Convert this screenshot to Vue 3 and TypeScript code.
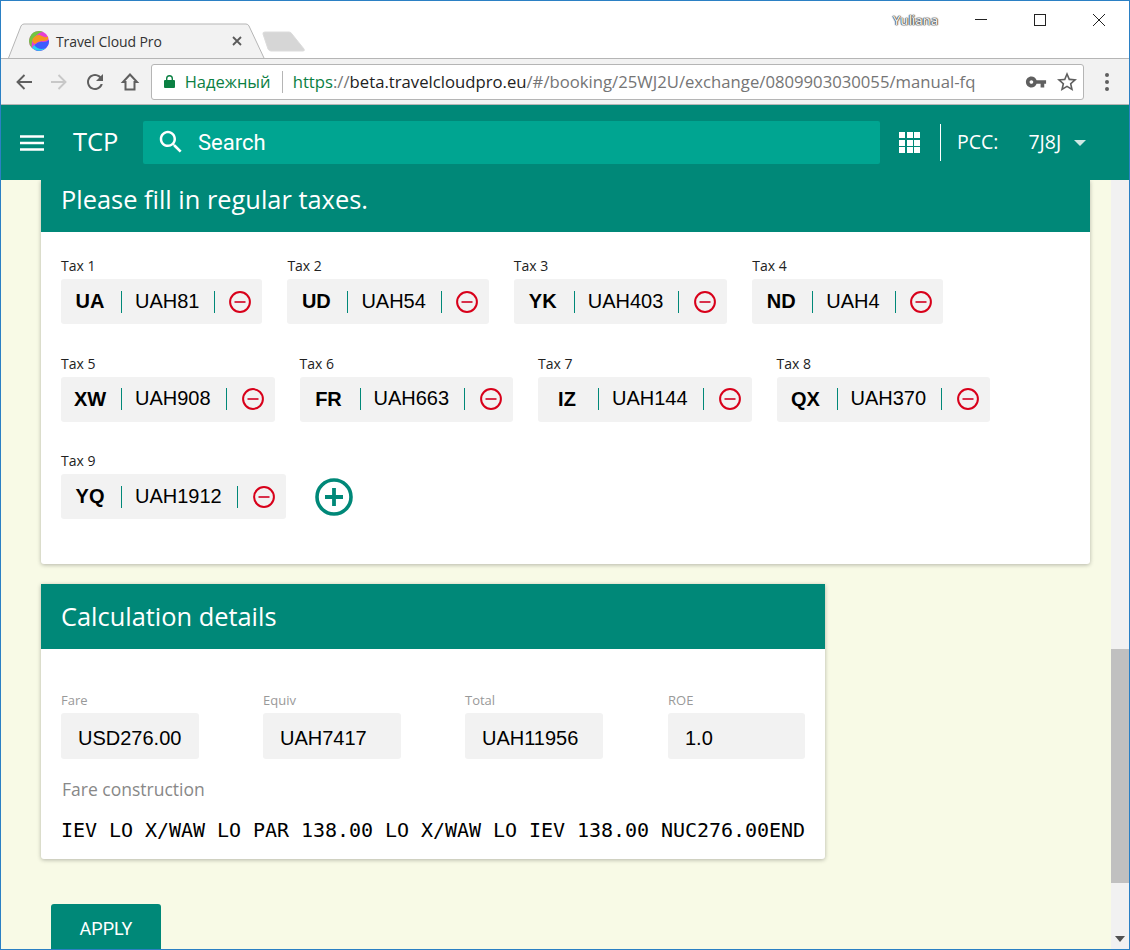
<script setup lang="ts">
interface Tax {
  label: string
  code: string
  amount: string
}

const taxes: Tax[] = [
  { label: 'Tax 1', code: 'UA', amount: 'UAH81' },
  { label: 'Tax 2', code: 'UD', amount: 'UAH54' },
  { label: 'Tax 3', code: 'YK', amount: 'UAH403' },
  { label: 'Tax 4', code: 'ND', amount: 'UAH4' },
  { label: 'Tax 5', code: 'XW', amount: 'UAH908' },
  { label: 'Tax 6', code: 'FR', amount: 'UAH663' },
  { label: 'Tax 7', code: 'IZ', amount: 'UAH144' },
  { label: 'Tax 8', code: 'QX', amount: 'UAH370' },
  { label: 'Tax 9', code: 'YQ', amount: 'UAH1912' },
]

const details = [
  { label: 'Fare', value: 'USD276.00' },
  { label: 'Equiv', value: 'UAH7417' },
  { label: 'Total', value: 'UAH11956' },
  { label: 'ROE', value: '1.0' },
]
</script>

<template>
  <div class="window">
    <div class="titlebar">
      <div class="tab">
        <svg class="tab__shape" width="258" height="36" viewBox="0 0 258 36">
          <path d="M0.5 35 L13 3 Q14 1 16 1 L238 1 Q240 1 241 3 L256 35" fill="#f2f2f2" stroke="#b5b5b5" />
        </svg>
        <svg class="tab__favicon" width="20" height="20" viewBox="0 0 20 20">
          <circle cx="10" cy="10" r="10" fill="#e63fd2" />
          <path d="M10 0 A10 10 0 0 0 3 17 Q1 9 9 3 Q11 1 14 1 A10 10 0 0 0 10 0 Z" fill="#72c63f" />
          <path d="M3.5 8 Q8 2 13 5 Q16 7 19 5.5 Q20 10 14 10 Q9 10 6 13 Q3 12 3.5 8 Z" fill="#f7941d" />
          <path d="M5.5 14 Q10 10 14 11 Q18 11 20 9 A10 10 0 0 1 6 19 Z" fill="#3d5cff" />
          <path d="M3 17 A10 10 0 0 0 17 17 Q10 20 5 14 Z" fill="#25d3ec" />
        </svg>
        <span class="tab__title">Travel Cloud Pro</span>
        <svg class="tab__close" width="12" height="12" viewBox="0 0 12 12">
          <path d="M2 2 L10 10 M10 2 L2 10" stroke="#5a5a5a" stroke-width="1.8" />
        </svg>
      </div>
      <svg class="newtab" width="44" height="22" viewBox="0 0 44 22">
        <path d="M1 3 Q0.5 1 3 1 L27 1 Q29 1 30 3 L42 18 Q43 20 41 20 L9 20 Q7 20 6 18 Z" fill="#d6d6d6" stroke="#dcdcdc" />
      </svg>
      <span class="user">Yuliana</span>
      <div class="winctl">
        <svg width="14" height="14" viewBox="0 0 14 14"><path d="M1 6.5 H13" stroke="#222" /></svg>
        <svg width="14" height="14" viewBox="0 0 14 14"><rect x="1.5" y="1.5" width="11" height="11" fill="none" stroke="#222" /></svg>
        <svg width="14" height="14" viewBox="0 0 14 14"><path d="M1 1 L13 13 M13 1 L1 13" stroke="#222" /></svg>
      </div>
    </div>

    <div class="toolbar">
      <button class="tool">
        <svg width="24" height="24" viewBox="0 0 24 24"><path d="M20 12H5.5M12.5 5l-7 7 7 7" fill="none" stroke="#5f5f5f" stroke-width="1.9" /></svg>
      </button>
      <button class="tool">
        <svg width="24" height="24" viewBox="0 0 24 24"><path d="M4 12h14.5M11.5 5l7 7-7 7" fill="none" stroke="#c8c8c8" stroke-width="1.9" /></svg>
      </button>
      <button class="tool">
        <svg width="24" height="24" viewBox="0 0 24 24"><path fill="#5f5f5f" d="M17.65 6.35C16.2 4.9 14.21 4 12 4c-4.42 0-7.99 3.58-7.99 8s3.57 8 7.99 8c3.73 0 6.84-2.55 7.73-6h-2.08c-.82 2.33-3.04 4-5.65 4-3.31 0-6-2.69-6-6s2.69-6 6-6c1.66 0 3.14.69 4.22 1.78L13 11h7V4l-2.35 2.35z" /></svg>
      </button>
      <button class="tool">
        <svg width="24" height="24" viewBox="0 0 24 24"><path d="M12 4.5 L5 12 H7.5 V19.5 H16.5 V12 H19 Z" fill="none" stroke="#5f5f5f" stroke-width="2" /></svg>
      </button>
      <div class="omnibox">
        <svg class="omnibox__lock" width="11" height="13" viewBox="0 0 11 13">
          <path fill="#0b8043" d="M1 5h1V3.5a3.5 3.5 0 0 1 7 0V5h1a1 1 0 0 1 1 1v6a1 1 0 0 1-1 1H1a1 1 0 0 1-1-1V6a1 1 0 0 1 1-1zm2.4 0h4.2V3.5a2.1 2.1 0 0 0-4.2 0z" />
        </svg>
        <span class="omnibox__secure">Надежный</span>
        <span class="omnibox__sep"></span>
        <span class="omnibox__url"><span class="u-green">https</span><span class="u-grey">://</span><span class="u-black">beta.travelcloudpro.eu</span><span class="u-grey">/#/booking/25WJ2U/exchange/0809903030055/manual-fq</span></span>
        <svg class="omnibox__key" width="22" height="22" viewBox="0 0 24 24"><path fill="#5f5f5f" d="M12.65 10C11.83 7.67 9.61 6 7 6c-3.31 0-6 2.69-6 6s2.69 6 6 6c2.61 0 4.83-1.67 5.65-4H17v4h4v-4h2v-4H12.65zM7 14c-1.1 0-2-.9-2-2s.9-2 2-2 2 .9 2 2-.9 2-2 2z" /></svg>
        <svg class="omnibox__star" width="24" height="24" viewBox="0 0 24 24"><path fill="#5f5f5f" d="M22 9.24l-7.19-.62L12 2 9.19 8.63 2 9.24l5.46 4.73L5.82 21 12 17.27 18.18 21l-1.63-7.03L22 9.24zM12 15.4l-3.76 2.27 1-4.28-3.32-2.88 4.38-.38L12 6.1l1.71 4.04 4.38.38-3.32 2.88 1 4.28L12 15.4z" /></svg>
      </div>
      <div class="dots"><i></i><i></i><i></i></div>
    </div>

    <header class="appbar">
      <svg class="appbar__menu" width="24" height="18" viewBox="0 0 24 18">
        <path d="M0 2.5 H24 M0 9 H24 M0 15.5 H24" stroke="#fff" stroke-width="2.6" />
      </svg>
      <span class="appbar__brand">TCP</span>
      <div class="search">
        <svg class="search__icon" width="30" height="30" viewBox="0 0 24 24"><path fill="#fff" d="M15.5 14h-.79l-.28-.27C15.41 12.59 16 11.11 16 9.5 16 5.91 13.09 3 9.5 3S3 5.91 3 9.5 5.91 16 9.5 16c1.61 0 3.09-.59 4.23-1.57l.27.28v.79l5 4.99L20.49 19l-4.99-5zm-6 0C7.01 14 5 11.99 5 9.5S7.01 5 9.5 5 14 7.01 14 9.5 11.99 14 9.5 14z" /></svg>
        <span>Search</span>
      </div>
      <div class="apps"><i v-for="n in 9" :key="n"></i></div>
      <span class="appbar__sep"></span>
      <span class="appbar__pcc">PCC:</span>
      <span class="appbar__code">7J8J</span>
      <span class="appbar__caret"></span>
    </header>

    <div class="viewport">
      <main class="page">
        <section class="card card--taxes">
          <h2 class="card__head card__head--cut">Please fill in regular taxes.</h2>
          <div class="taxes">
            <div v-for="tax in taxes" :key="tax.label" class="tax">
              <label class="tax__label">{{ tax.label }}</label>
              <div class="chip">
                <b class="chip__code">{{ tax.code }}</b>
                <span class="chip__value">{{ tax.amount }}</span>
                <svg
                  class="chip__remove"
                  :class="{ 'chip__remove--long': tax.amount.length > 5 }"
                  width="22"
                  height="22"
                  viewBox="0 0 22 22"
                >
                  <circle cx="11" cy="11" r="9.9" fill="none" stroke="#d8001a" stroke-width="2" />
                  <path d="M5.5 11 H16.5" stroke="#d8304a" stroke-width="2" />
                </svg>
              </div>
            </div>
            <svg class="add" width="38" height="38" viewBox="0 0 38 38">
              <circle cx="19" cy="19" r="17" fill="none" stroke="#008878" stroke-width="3.6" />
              <path d="M10 19 H28 M19 10 V28" stroke="#008878" stroke-width="3.8" />
            </svg>
          </div>
        </section>

        <section class="card card--calc">
          <h2 class="card__head card__head--calc">Calculation details</h2>
          <div class="calc">
            <div class="calc__fields">
              <div v-for="item in details" :key="item.label" class="field">
                <label class="field__label">{{ item.label }}</label>
                <div class="field__value">{{ item.value }}</div>
              </div>
            </div>
            <div class="calc__title">Fare construction</div>
            <div class="calc__mono">IEV LO X/WAW LO PAR 138.00 LO X/WAW LO IEV 138.00 NUC276.00END</div>
          </div>
        </section>

        <button class="apply">APPLY</button>
      </main>
      <div class="scrollbar">
        <div class="scrollbar__track"><div class="scrollbar__thumb"></div></div>
        <div class="scrollbar__arrow"></div>
      </div>
    </div>
  </div>
</template>

<style>
html,
body {
  margin: 0;
  overflow: hidden;
}
</style>

<style scoped>
.window {
  box-sizing: border-box;
  width: 1130px;
  height: 950px;
  border: 1px solid #2b80c4;
  display: flex;
  flex-direction: column;
  overflow: hidden;
  background: #fff;
  font-family: 'Open Sans', sans-serif;
}

.titlebar {
  flex: none;
  height: 57px;
  display: flex;
  align-items: flex-end;
  border-bottom: 1px solid #b5b5b5;
}

.tab {
  position: relative;
  width: 258px;
  height: 34px;
  margin-left: 7px;
  margin-bottom: -1px;
  padding-bottom: 2px;
  box-sizing: border-box;
  display: flex;
  align-items: center;
  flex: none;
}

.tab__shape {
  position: absolute;
  left: 0;
  bottom: 0;
}

.tab__favicon {
  position: relative;
  margin-left: 21px;
  flex: none;
}

.tab__title {
  position: relative;
  margin-left: 7px;
  font-size: 14px;
  color: #333;
  white-space: nowrap;
  letter-spacing: -0.1px;
}

.tab__close {
  position: relative;
  margin-left: auto;
  margin-right: 23px;
}

.newtab {
  flex: none;
  margin-left: -4px;
  margin-bottom: 5px;
}

.user {
  margin-left: auto;
  align-self: flex-start;
  margin-top: 10px;
  font-size: 13px;
  font-weight: 600;
  letter-spacing: -0.2px;
  color: #ececec;
  text-shadow: 0 0 1px #222, 0 0 1px #222, 0 0 1.5px #444;
}

.winctl {
  align-self: flex-start;
  margin: 12px 23px 0 36px;
  display: flex;
  gap: 45px;
}

.toolbar {
  flex: none;
  height: 45px;
  display: flex;
  align-items: center;
  padding-left: 5.5px;
  background: #f2f2f2;
  border-bottom: 1px solid #b5b5b5;
}

.tool {
  width: 35.3px;
  height: 35px;
  padding: 0;
  border: 0;
  background: none;
  display: flex;
  align-items: center;
  justify-content: center;
}

.omnibox {
  box-sizing: border-box;
  width: 933px;
  height: 36px;
  margin-left: 3px;
  border: 1px solid #b5b5b5;
  border-radius: 3px;
  background: #fff;
  display: flex;
  align-items: center;
  font-size: 16.7px;
  white-space: nowrap;
}

.omnibox__lock {
  margin-left: 12px;
  flex: none;
}

.omnibox__secure {
  margin-left: 10px;
  color: #0b8043;
  width: 85px;
  font-size: 16.5px;
}

.omnibox__sep {
  width: 1px;
  height: 22px;
  margin-left: 12px;
  background: #b5b5b5;
}

.omnibox__url {
  margin-left: 10px;
  width: 732px;
}

.u-green {
  color: #0b8043;
}

.u-grey {
  color: #757575;
}

.u-black {
  color: #222;
}

.omnibox__key {
  flex: none;
}

.omnibox__star {
  flex: none;
  margin-left: 8px;
}

.dots {
  margin-left: 21px;
  display: flex;
  flex-direction: column;
  gap: 3px;
}

.dots i {
  width: 4px;
  height: 4px;
  border-radius: 50%;
  background: #5f5f5f;
}

.appbar {
  flex: none;
  height: 75px;
  display: flex;
  align-items: center;
  background: #008878;
  color: #fff;
  padding-left: 19px;
}

.appbar__brand {
  margin: -3px 0 0 29px;
  width: 70px;
  font-size: 25.5px;
}

.search {
  width: 737px;
  height: 43px;
  display: flex;
  align-items: center;
  gap: 12px;
  padding-left: 13px;
  box-sizing: border-box;
  border-radius: 2px;
  background: #00a591;
  font-family: Roboto, sans-serif;
  font-size: 22px;
  font-weight: 400;
}

.search__icon {
  margin-top: -2px;
}

.search span {
  margin-top: -1px;
}

.apps {
  margin-left: 19px;
  display: grid;
  grid-template-columns: repeat(3, 6px);
  grid-auto-rows: 6px;
  gap: 1.5px;
}

.apps i {
  background: #fff;
}

.appbar__sep {
  width: 1px;
  height: 37px;
  margin-left: 20px;
  background: #fff;
}

.appbar__pcc {
  margin: -2px 0 0 16px;
  font-size: 19.5px;
}

.appbar__code {
  margin: -2px 0 0 30px;
  font-size: 19.5px;
}

.appbar__caret {
  margin-left: 13px;
  border-left: 6.5px solid transparent;
  border-right: 6.5px solid transparent;
  border-top: 6.5px solid #cfe8e4;
}

.viewport {
  flex: 1;
  min-height: 0;
  display: flex;
  background: #f8fae6;
}

.page {
  flex: 1;
  min-width: 0;
  padding-left: 40px;
  overflow: hidden;
}

.card {
  background: #fff;
  border-radius: 0 0 3px 3px;
  box-shadow: 0 1px 4px rgba(0, 0, 0, 0.28);
}

.card--taxes {
  width: 1049px;
}

.card--calc {
  width: 784px;
  margin-top: 20px;
}

.card__head {
  margin: 0;
  padding-left: 20px;
  display: flex;
  align-items: center;
  box-sizing: border-box;
  background: #008878;
  color: #fff;
  font-size: 25.4px;
  font-weight: 400;
}

.card__head--cut {
  height: 52px;
  padding-bottom: 14px;
}

.card__head--calc {
  height: 65px;
  padding-bottom: 2px;
}

.taxes {
  display: flex;
  flex-wrap: wrap;
  column-gap: 25px;
  row-gap: 34.5px;
  padding: 29px 20px 45px;
}

.tax__label {
  display: block;
  height: 18px;
  font-size: 14px;
  line-height: 10px;
  color: #222;
}

.chip {
  height: 45px;
  display: flex;
  align-items: center;
  border-radius: 3px;
  background: #f2f2f2;
  font-family: 'Liberation Sans', Arial, sans-serif;
  font-size: 20px;
  color: #000;
}

.chip__code {
  box-sizing: border-box;
  width: 60px;
  padding-right: 2px;
  text-align: center;
  flex: none;
}

.chip__value {
  height: 22px;
  line-height: 21px;
  padding: 0 15px 0 13px;
  border-left: 1px solid #008878;
  border-right: 1px solid #008878;
}

.chip__remove {
  margin: 0 10.9px 0 14px;
  flex: none;
}

.chip__remove--long {
  margin-left: 15px;
}

.add {
  align-self: flex-end;
  margin: 0 0 3.5px 4px;
}

.calc {
  padding: 44px 20px 17px;
}

.calc__fields {
  display: flex;
  gap: 64px;
}

.field__label {
  display: block;
  height: 20px;
  font-size: 13px;
  line-height: 14px;
  color: #999;
}

.field__value {
  box-sizing: border-box;
  width: 138px;
  height: 46px;
  padding-left: 17px;
  line-height: 50px;
  border-radius: 3px;
  background: #f2f2f2;
  font-family: 'Liberation Sans', Arial, sans-serif;
  font-size: 20px;
  color: #000;
}

.field:last-child {
  margin-left: 1px;
}

.field:last-child .field__value {
  width: 137px;
}

.calc__title {
  margin-top: 18px;
  padding-left: 1px;
  font-size: 17.5px;
  line-height: 24px;
  color: #888;
}

.calc__mono {
  margin-top: 17px;
  font-family: 'DejaVu Sans Mono', monospace;
  font-size: 20px;
  letter-spacing: -0.04px;
  line-height: 24px;
  color: #000;
  white-space: nowrap;
}

.apply {
  display: block;
  width: 110px;
  height: 48px;
  margin: 45px 0 0 10px;
  border: 0;
  border-radius: 3px;
  background: #008878;
  color: #fff;
  font-family: Roboto, sans-serif;
  font-size: 18px;
}

.scrollbar {
  flex: none;
  width: 18px;
  display: flex;
  flex-direction: column;
  background: #f1f1f1;
}

.scrollbar__track {
  flex: 1;
  padding-top: 469px;
}

.scrollbar__thumb {
  height: 234px;
  background: #c0c0c0;
}

.scrollbar__arrow {
  align-self: center;
  margin-bottom: 7px;
  border-left: 5px solid transparent;
  border-right: 5px solid transparent;
  border-top: 6px solid #505050;
}
</style>
